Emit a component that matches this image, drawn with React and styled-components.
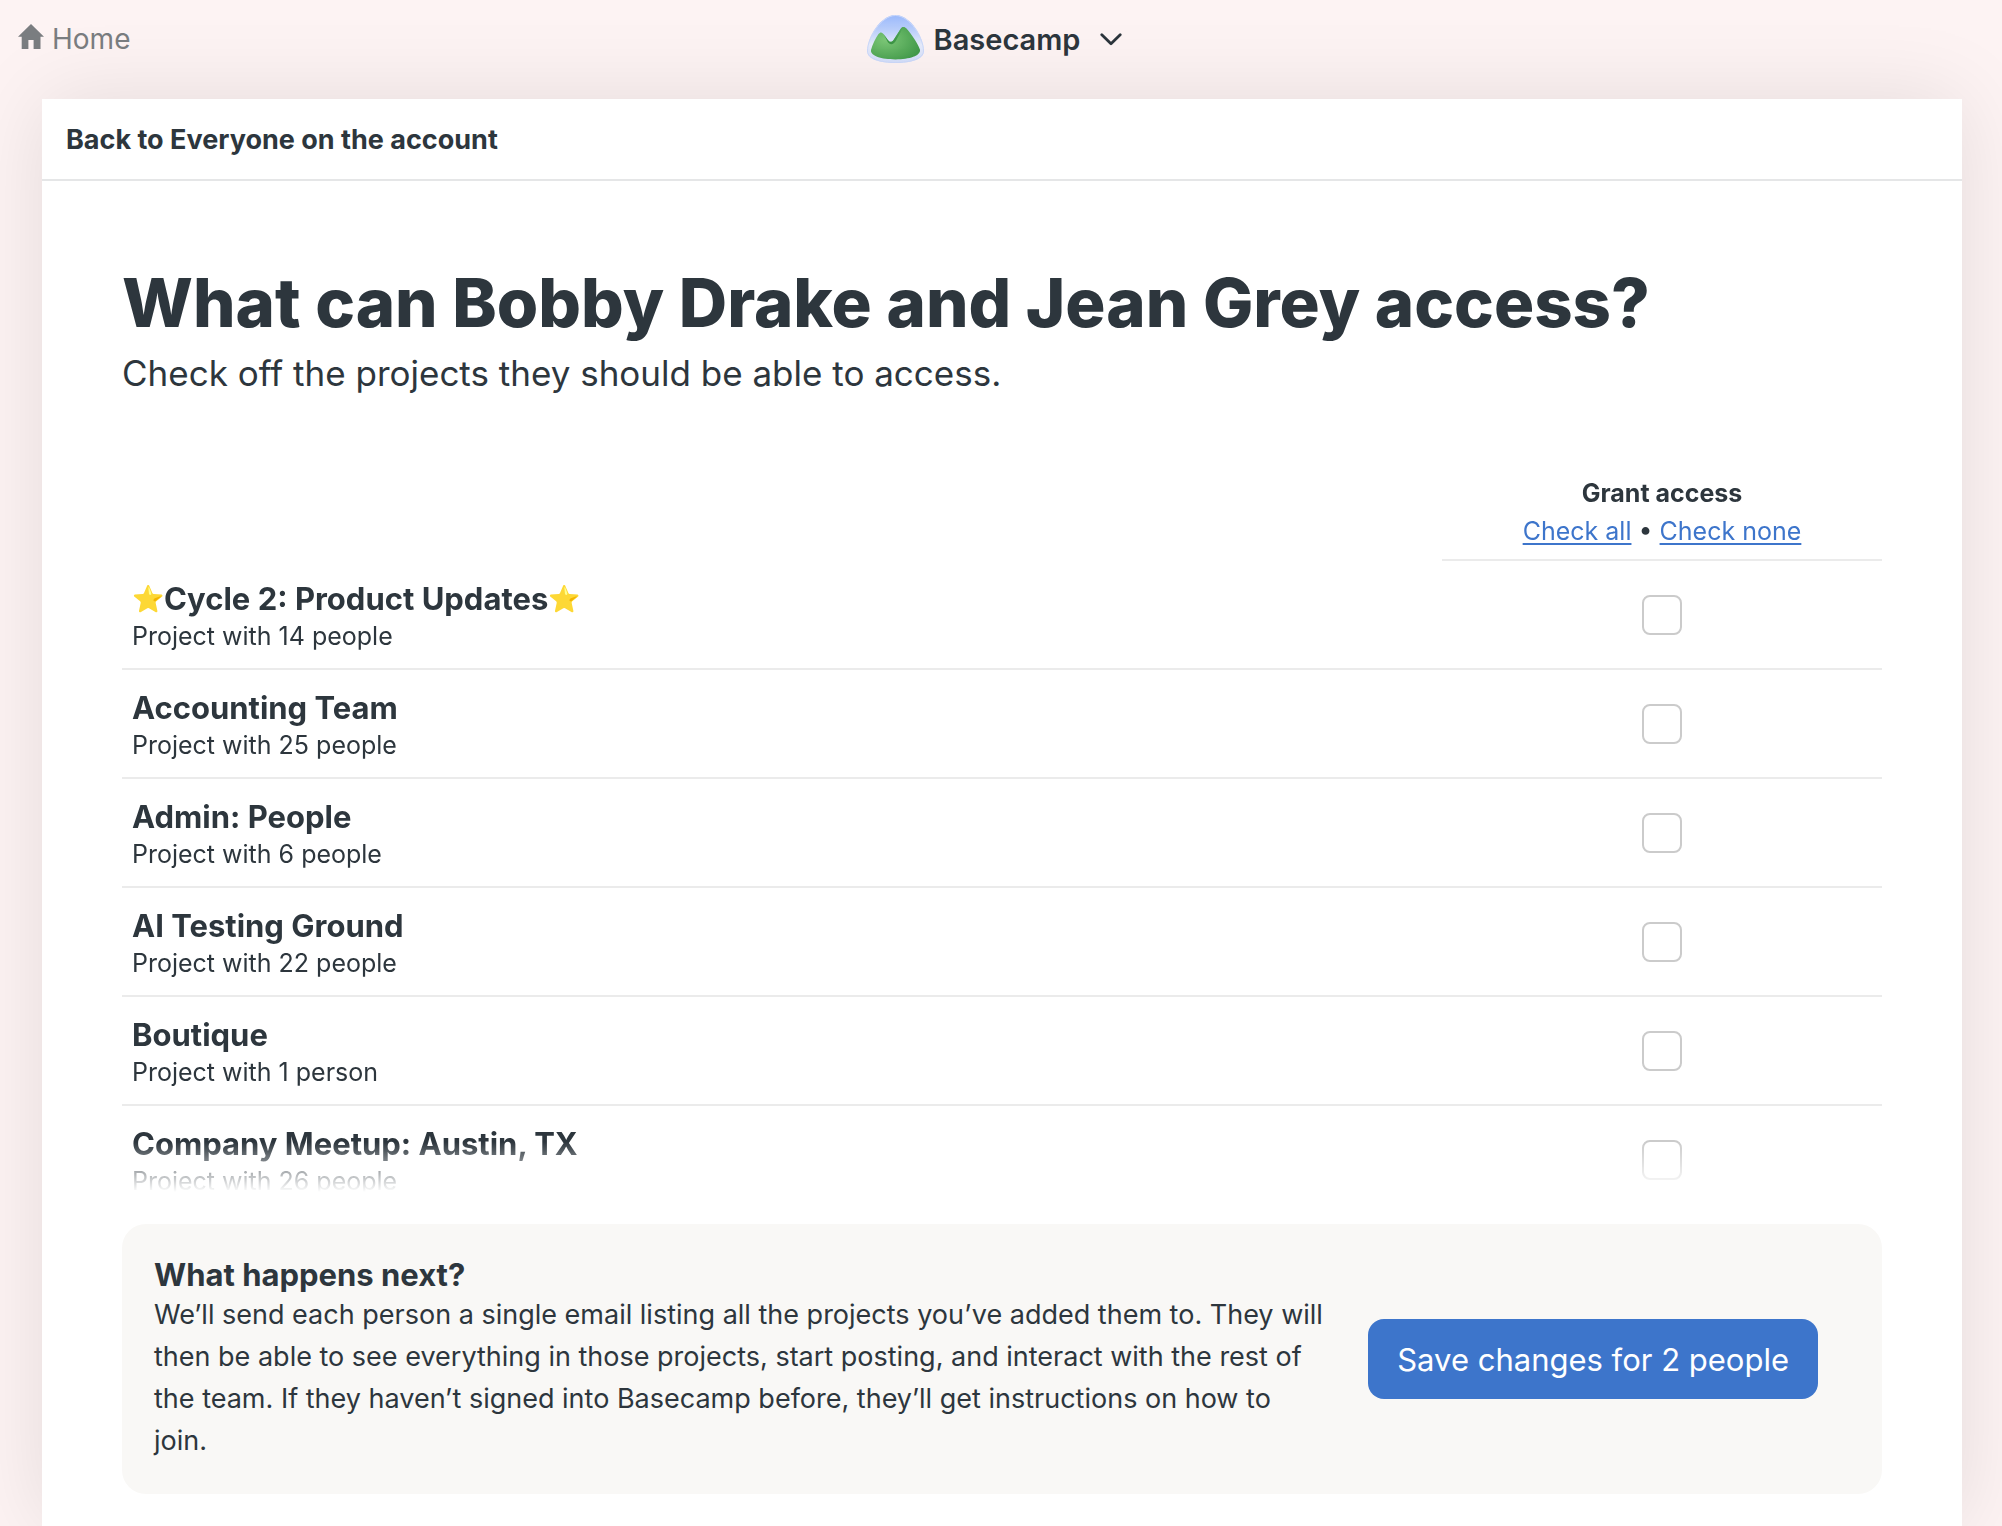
import React, { useState } from 'react';
import styled, { createGlobalStyle } from 'styled-components';

const App = () => {
  const [checked, setChecked] = useState([]);

  const toggle = id => {
    setChecked(
      checked.includes(id) ? checked.filter(el => el !== id) : [...checked, id]
    );
  };
  const checkAll = e => {
    e.preventDefault();
    setChecked(projects.map(el => el.id));
  };
  const checkNone = e => {
    e.preventDefault();
    setChecked([]);
  };

  return (
    <Page>
      <GlobalStyle />
      <Nav>
        <HomeLink href="#home">
          <HomeIcon />
          Home
        </HomeLink>
        <AccountButton type="button">
          <Logo />
          Basecamp
          <Chevron />
        </AccountButton>
      </Nav>
      <Card>
        <CardHeader>
          <BackLink href="#people">Back to Everyone on the account</BackLink>
        </CardHeader>
        <Content>
          <Title>What can Bobby Drake and Jean Grey access?</Title>
          <SubTitle>
            Check off the projects they should be able to access.
          </SubTitle>
          <ProjectList>
            <Table>
              <thead>
                <tr>
                  <td />
                  <HeadCell scope="col">
                    <HeadTitle>Grant access</HeadTitle>
                    <Link href="#all" onClick={checkAll}>
                      Check all
                    </Link>{' '}
                    •{' '}
                    <Link href="#none" onClick={checkNone}>
                      Check none
                    </Link>
                  </HeadCell>
                </tr>
              </thead>
              <tbody>
                {projects.map(({ id, name, people, starred }) => (
                  <tr key={id}>
                    <NameCell>
                      <Name htmlFor={id}>
                        {starred && <Star>⭐</Star>}
                        {name}
                        {starred && <Star>⭐</Star>}
                      </Name>
                      <People>Project with {people}</People>
                    </NameCell>
                    <CheckCell>
                      <CheckBox
                        type="checkbox"
                        id={id}
                        checked={checked.includes(id)}
                        onChange={() => toggle(id)}
                      />
                    </CheckCell>
                  </tr>
                ))}
              </tbody>
            </Table>
          </ProjectList>
          <NextStep>
            <NextText>
              <NextTitle>What happens next?</NextTitle>
              <NextInfo>
                We’ll send each person a single email listing all the projects
                you’ve added them to. They will then be able to see everything
                in those projects, start posting, and interact with the rest of
                the team. If they haven’t signed into Basecamp before, they’ll
                get instructions on how to join.
              </NextInfo>
            </NextText>
            <SaveButton type="submit">Save changes for 2 people</SaveButton>
          </NextStep>
        </Content>
      </Card>
    </Page>
  );
};

const projects = [
  {
    id: 'cycle',
    name: 'Cycle 2: Product Updates',
    people: '14 people',
    starred: true,
  },
  { id: 'accounting', name: 'Accounting Team', people: '25 people' },
  { id: 'admin', name: 'Admin: People', people: '6 people' },
  { id: 'ai', name: 'AI Testing Ground', people: '22 people' },
  { id: 'boutique', name: 'Boutique', people: '1 person' },
  { id: 'meetup', name: 'Company Meetup: Austin, TX', people: '26 people' },
];

const HomeIcon = () => (
  <svg width="26" height="25" viewBox="0 0 26 25" aria-hidden="true">
    <path
      fill="#7a7d80"
      d="M13 0 26 12.7H22.5V25H15.6V16H10.4V25H3.7V12.7H0Z"
    />
  </svg>
);

const Chevron = () => (
  <ChevronSvg width="22" height="13" viewBox="0 0 22 13" aria-hidden="true">
    <path
      d="M1.8 1.8 11 10.8 20.2 1.8"
      fill="none"
      stroke="#2c353c"
      strokeWidth="2.8"
      strokeLinecap="round"
      strokeLinejoin="round"
    />
  </ChevronSvg>
);

const Logo = () => (
  <svg width="57" height="48" viewBox="0 0 57 48" aria-hidden="true">
    <defs>
      <linearGradient id="sky" x1="0" y1="0" x2="0" y2="1">
        <stop offset="0" stopColor="#9ab8fb" />
        <stop offset="0.3" stopColor="#b9cefb" />
        <stop offset="0.62" stopColor="#e6ebfb" />
        <stop offset="1" stopColor="#d3defa" />
      </linearGradient>
      <radialGradient id="hill" cx="0.3" cy="0.4" r="0.75">
        <stop offset="0" stopColor="#7cc877" />
        <stop offset="0.5" stopColor="#60b261" />
        <stop offset="1" stopColor="#439b4b" />
      </radialGradient>
      <linearGradient id="slope" x1="0" y1="1" x2="1" y2="0">
        <stop offset="0" stopColor="#35903f" />
        <stop offset="1" stopColor="#55a95a" />
      </linearGradient>
    </defs>
    <path
      fill="url(#sky)"
      d="M28.5 0C43.5 0 57 22.5 57 36C57 44.5 43.5 48 28.5 48S0 44.5 0 36C0 22.5 13.5 0 28.5 0Z"
    />
    <path
      fill="none"
      stroke="#ccd9fa"
      d="M28.5 0.5C43 0.5 56.5 23 56.5 36C56.5 44 43.5 47.5 28.5 47.5S0.5 44 0.5 36C0.5 23 14 0.5 28.5 0.5Z"
    />
    <path
      fill="url(#hill)"
      d="M4 35C5.5 29.5 8.5 23 11.5 19C13.2 16.8 14.9 16.9 16.5 18.9L20.9 25C22.8 27.6 24.9 27.4 26.7 24.8L33.6 14C35.2 11.5 37.6 11.3 39.5 13.6C44.5 19.5 50.5 28 53 34.8C53.8 40.8 42.5 44.4 28.5 44.4S3.2 41 4 35Z"
    />
    <path
      fill="url(#slope)"
      d="M16.5 18.9L20.9 25C22.8 27.6 24.9 27.4 26.7 24.8L33.6 14C34.6 12.4 35.9 11.8 37.2 12.1C36.2 12.7 35.4 13.8 34.6 15.3L28.8 26C26.4 30 22.8 30.2 20.5 26.5Z"
    />
  </svg>
);

const GlobalStyle = createGlobalStyle`
  * {
    box-sizing: border-box;
  }
  body {
    margin: 0;
    background: #fdf3f3;
    color: #2d363d;
    font-family: Inter, 'Liberation Sans', sans-serif;
  }
  h1, h2, p {
    margin: 0;
  }
`;

const Page = styled.div`
  display: flex;
  flex-direction: column;
  height: 100vh;
`;
const Nav = styled.nav`
  display: grid;
  grid-template-columns: 1fr auto 1fr;
  align-items: center;
  height: 78px;
  padding: 0 18px;
`;
const HomeLink = styled.a`
  display: flex;
  align-items: baseline;
  gap: 8px;
  justify-self: start;
  color: #7a7d80;
  font-size: 28px;
  text-decoration: none;
`;
const AccountButton = styled.button`
  display: flex;
  align-items: center;
  height: 64px;
  padding: 0 20px 0 7px;
  border: 0;
  border-radius: 32px;
  gap: 10px;
  background: #fdf3f3;
  color: inherit;
  font-family: inherit;
  font-size: 29px;
  font-weight: 600;
`;
const ChevronSvg = styled.svg`
  margin-left: 10px;
`;
const Card = styled.main`
  display: flex;
  flex: 1;
  flex-direction: column;
  min-height: 0;
  margin: 21px 40px 0 42px;
  background: #fff;
  box-shadow: 0 0 80px rgba(0, 0, 0, 0.1);
`;
const CardHeader = styled.header`
  display: flex;
  align-items: center;
  flex-shrink: 0;
  height: 82px;
  padding: 0 24px;
  border-bottom: 2px solid #e5e6e7;
`;
const BackLink = styled.a`
  color: inherit;
  font-size: 27px;
  font-weight: 700;
  text-decoration: none;
`;
const Content = styled.section`
  display: flex;
  flex: 1;
  flex-direction: column;
  min-height: 0;
  padding: 84px 80px 32px;
`;
const Title = styled.h1`
  font-size: 67px;
  font-weight: 800;
  line-height: 76px;
`;
const SubTitle = styled.p`
  margin-top: 10px;
  font-size: 35px;
  line-height: 44px;
`;
const ProjectList = styled.div`
  flex: 1;
  min-height: 0;
  margin: 79px 0 32px;
  overflow-y: auto;
  scrollbar-width: none;
  mask-image: linear-gradient(#000 calc(100% - 50px), transparent);
`;
const Table = styled.table`
  width: 100%;
  border-spacing: 0;
  table-layout: fixed;
`;
const HeadCell = styled.th`
  width: 25%;
  padding: 0 0 9px;
  border-bottom: 2px solid #ebebeb;
  font-size: 25px;
  font-weight: 400;
  line-height: 38px;
  text-align: center;
`;
const HeadTitle = styled.div`
  font-weight: 700;
`;
const Link = styled.a`
  color: #3d75cb;
  text-decoration: underline 2px;
  text-decoration-skip-ink: none;
  text-underline-offset: 3px;
`;
const NameCell = styled.td`
  padding: 19px 10px 14px;
  border-bottom: 2px solid #ebebeb;
`;
const CheckCell = styled.td`
  padding: 0;
  border-bottom: 2px solid #ebebeb;
  text-align: center;
  vertical-align: middle;
`;
const Name = styled.label`
  display: block;
  height: 38px;
  font-size: 31px;
  font-weight: 700;
  line-height: 38px;
`;
const Star = styled.span`
  font-size: 26px;
  line-height: 1;
  vertical-align: 2px;
`;
const People = styled.p`
  font-size: 25px;
  line-height: 36px;
`;
const CheckBox = styled.input`
  display: block;
  width: 40px;
  height: 40px;
  margin: 0 auto;
  border: 2px solid #cbcbcb;
  border-radius: 8px;
  appearance: none;
  background: #fff;

  &:checked {
    border-color: #3d75cb;
    background: #3d75cb;
  }
`;
const NextStep = styled.footer`
  display: flex;
  align-items: center;
  flex-shrink: 0;
  gap: 40px;
  padding: 32px 64px 32px 32px;
  border-radius: 24px;
  background: #f9f8f6;
`;
const NextText = styled.div`
  flex: 1;
`;
const NextTitle = styled.h2`
  font-size: 31px;
  font-weight: 700;
  line-height: 38px;
`;
const NextInfo = styled.p`
  font-size: 27px;
  line-height: 42px;
`;
const SaveButton = styled.button`
  height: 80px;
  padding: 0 29px;
  border: 0;
  border-radius: 16px;
  background: #3d75cb;
  color: #fff;
  font-family: inherit;
  font-size: 31px;
  white-space: nowrap;
`;

export default App;
